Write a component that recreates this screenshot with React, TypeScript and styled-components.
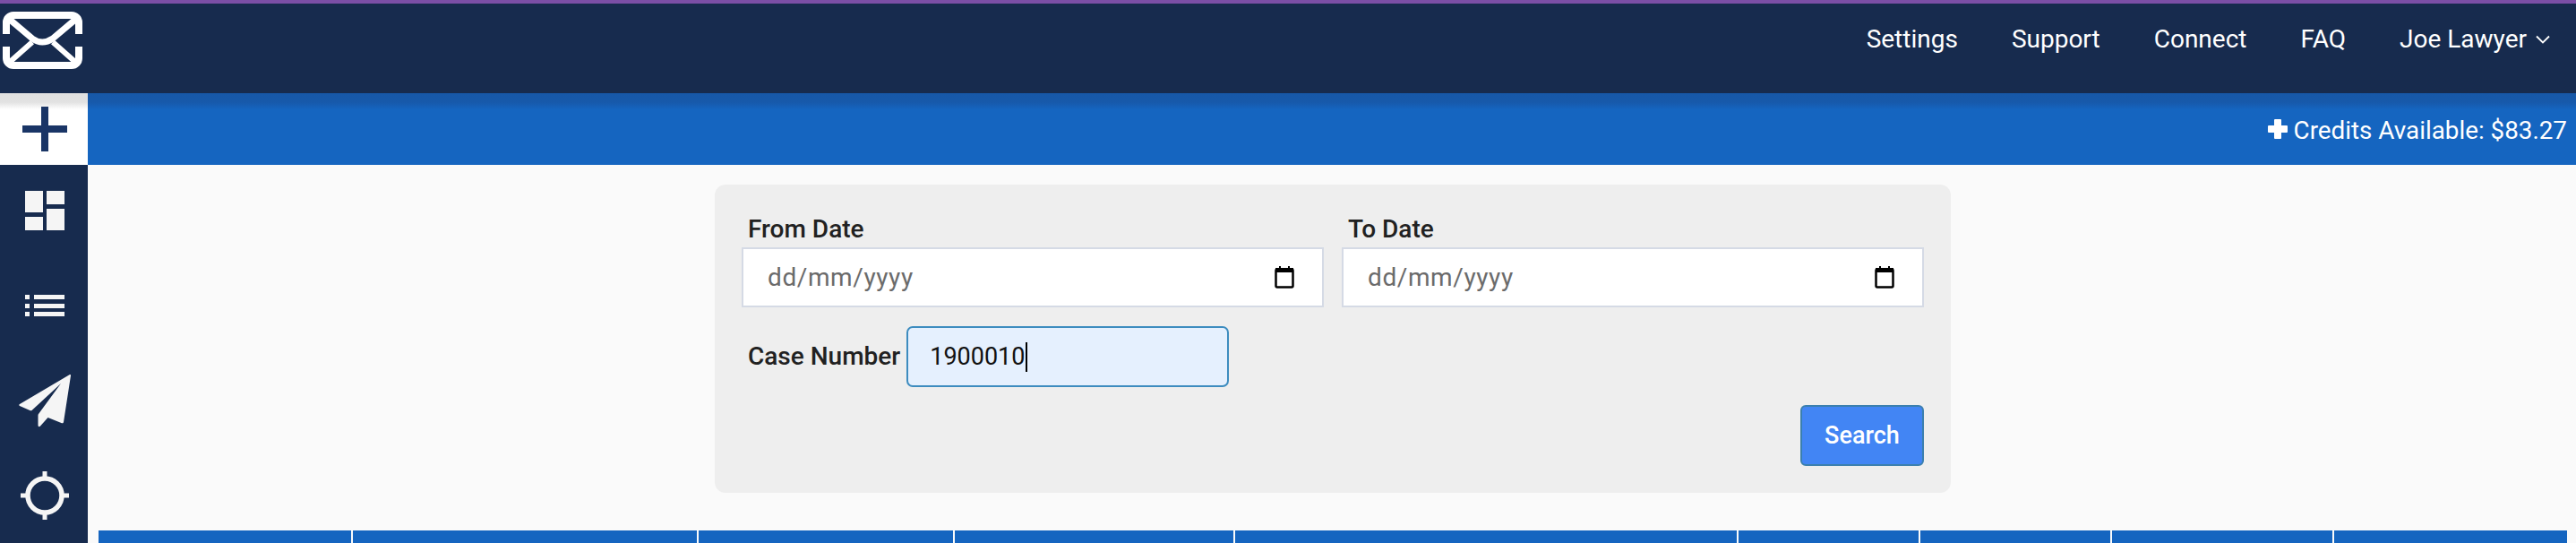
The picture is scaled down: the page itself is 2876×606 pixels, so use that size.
import React from 'react';
import styled, { createGlobalStyle } from 'styled-components';

const GlobalStyle = createGlobalStyle`
  html, body {
    margin: 0;
    padding: 0;
    height: 100%;
    background: #fafafa;
    overflow: hidden;
  }
  * {
    box-sizing: border-box;
  }
`;

const Page = styled.div`
  display: flex;
  flex-direction: column;
  height: 100vh;
  overflow: hidden;
  font-family: Roboto, "Liberation Sans", sans-serif;
  background: #fafafa;
`;

const TopStripe = styled.div`
  flex: none;
  height: 4px;
  background: #7b4fa6;
`;

const Header = styled.header`
  flex: none;
  display: flex;
  justify-content: space-between;
  height: 100px;
  padding: 9px 29px 0 3px;
  background: #172b4e;
`;

const NavList = styled.nav`
  display: flex;
  align-items: flex-start;
  gap: 60px;
  padding-top: 10px;
`;

const NavLink = styled.a`
  display: flex;
  align-items: center;
  gap: 10px;
  font-size: 28px;
  line-height: 42px;
  color: #ffffff;
`;

const Body = styled.div`
  flex: 1;
  display: flex;
  min-height: 0;
`;

const Sidebar = styled.aside`
  flex: none;
  display: flex;
  flex-direction: column;
  width: 98px;
  background: #172b4e;
`;

const AddButton = styled.div`
  flex: none;
  display: flex;
  align-items: center;
  justify-content: center;
  height: 80px;
  padding-left: 2px;
  background: linear-gradient(#e0e0e0 0, #e2e2e2 10px, #ffffff 18px);
`;

const SideIcons = styled.div`
  display: flex;
  flex-direction: column;
  align-items: center;
  gap: 46px;
  padding: 21px 0 0 2px;
`;

const Main = styled.main`
  flex: 1;
  display: flex;
  flex-direction: column;
  min-width: 0;
`;

const CreditsBar = styled.div`
  flex: none;
  display: flex;
  align-items: center;
  justify-content: flex-end;
  gap: 7px;
  height: 80px;
  padding: 2px 10px 0 0;
  font-size: 27.8px;
  color: #ffffff;
  background: linear-gradient(#1758a8 0, #1759aa 10px, #1565c0 18px);

  svg {
    margin-top: -2px;
  }
`;

const SearchPanel = styled.form`
  flex: none;
  display: flex;
  flex-direction: column;
  align-self: center;
  width: 1380px;
  height: 344px;
  margin: 22px 0 0 2px;
  padding: 30px 30px 0;
  border-radius: 12px;
  background: #eeeeee;
`;

const DateRow = styled.div`
  display: flex;
  gap: 20px;
`;

const DateField = styled.div`
  display: flex;
  flex-direction: column;
  width: 650px;
`;

const Label = styled.label`
  font-size: 28px;
  font-weight: 500;
  line-height: 40px;
  color: #212121;
`;

const FieldLabel = styled(Label)`
  padding-left: 7px;
`;

const DateBox = styled.div`
  display: flex;
  align-items: center;
  justify-content: space-between;
  height: 67px;
  padding: 0 31px 0 27px;
  border: 2px solid #d5dae5;
  background: #ffffff;
`;

const DateInput = styled.input`
  width: 300px;
  padding: 0;
  border: none;
  outline: none;
  background: transparent;
  font-family: inherit;
  font-size: 28px;
  letter-spacing: 0.6px;

  &::placeholder {
    color: #6b6b6b;
    opacity: 1;
  }
`;

const CaseRow = styled.div`
  display: flex;
  align-items: center;
  gap: 7px;
  margin-top: 21px;
  padding-left: 7px;
`;

const CaseInput = styled.div`
  display: flex;
  align-items: center;
  width: 360px;
  height: 68px;
  padding-left: 24px;
  border: 2px solid #3d8cbf;
  border-radius: 7px;
  background: #e5f0fe;
  font-size: 27px;
  color: #111111;
`;

const Caret = styled.span`
  width: 2px;
  height: 33px;
  margin-left: 1px;
  background: #000000;
`;

const ButtonRow = styled.div`
  display: flex;
  justify-content: flex-end;
  margin-top: 20px;
`;

const SearchButton = styled.button`
  width: 138px;
  height: 68px;
  padding: 0;
  border: 2px solid #3b7fae;
  border-radius: 6px;
  background: #4285f4;
  color: #ffffff;
  font-family: inherit;
  font-size: 27px;
  font-weight: 500;
`;

const ResultsHead = styled.div`
  flex: none;
  display: grid;
  grid-template-columns: 282px 384px 284px 311px 560px 201px 212px 246px 260px;
  gap: 2px;
  width: 2756px;
  height: 60px;
  margin: 42px 0 0 12px;
`;

const HeadCell = styled.div`
  background: #1565c0;
`;

const LogoIcon = () => (
  <svg width="89" height="65" viewBox="0 0 89 65" fill="none" stroke="#ffffff" strokeWidth="8">
    <path d="M4 25V12a8 8 0 0 1 8-8h65a8 8 0 0 1 8 8v13" />
    <path d="M4 39v13a8 8 0 0 0 8 8h65a8 8 0 0 0 8-8V39" />
    <path d="M7 8l26 22q11 8 23 0L82 8" strokeWidth="7" />
    <path d="M33 34L7 57M56 34l26 23" strokeWidth="6" />
  </svg>
);

const PlusIcon = () => (
  <svg width="50" height="50" viewBox="0 0 50 50" fill="#1a3566">
    <rect x="21" y="0" width="8" height="50" />
    <rect x="0" y="21" width="50" height="8" />
  </svg>
);

const DashboardIcon = () => (
  <svg width="60" height="60" viewBox="0 0 60 60" fill="#f5f5f5">
    <rect x="8" y="8" width="20" height="24" />
    <rect x="32" y="8" width="20" height="15" />
    <rect x="8" y="37" width="20" height="15" />
    <rect x="32" y="28" width="20" height="24" />
  </svg>
);

const ListIcon = () => (
  <svg width="60" height="60" viewBox="0 0 60 60" fill="#f5f5f5">
    <rect x="8" y="18" width="5" height="5" />
    <rect x="8" y="28" width="5" height="5" />
    <rect x="8" y="37" width="5" height="5" />
    <rect x="18" y="18" width="34" height="5" />
    <rect x="18" y="28" width="34" height="5" />
    <rect x="18" y="37" width="34" height="5" />
  </svg>
);

const PlaneIcon = () => (
  <svg width="60" height="60" viewBox="0 0 60 60" fill="#f5f5f5">
    <path d="M57.500 1.200c1-.5 1.600 0 1.500 1L51 54c-.2 1-1 1.500-2 1.200L33.500 49 25 58.500c-1 1.300-2.500.8-2.500-1V46.500c0-.7.3-1.200.7-1.700L48 11 15.500 41c-.5.4-1 .5-1.600.2L2 36c-1-.5-1-1.500 0-2z" />
  </svg>
);

const TargetIcon = () => (
  <svg width="60" height="60" viewBox="0 0 60 60" fill="none" stroke="#f5f5f5">
    <circle cx="30" cy="30" r="19" strokeWidth="5.500" />
    <path d="M30 3v6M30 51v6M3 30h6M51 30h6" strokeWidth="5" />
  </svg>
);

const CalendarIcon = () => (
  <svg width="22" height="25" viewBox="0 0 22 25" fill="none" stroke="#000000">
    <rect x="1.500" y="3.500" width="19" height="20" rx="1.500" strokeWidth="2.500" />
    <rect x="1" y="2" width="20" height="5" fill="#000000" stroke="none" />
    <path d="M6 0v3M16 0v3" strokeWidth="2" />
  </svg>
);

const ChevronIcon = () => (
  <svg width="16" height="10" viewBox="0 0 16 10" fill="none" stroke="#ffffff" strokeWidth="1.800">
    <path d="M1 1.500l7 7 7-7" />
  </svg>
);

const CreditPlusIcon = () => (
  <svg width="22" height="22" viewBox="0 0 22 22" fill="#ffffff">
    <rect x="7" y="0" width="8" height="22" rx="1" />
    <rect x="0" y="7" width="22" height="8" rx="1" />
  </svg>
);

const navLinks = ['Settings', 'Support', 'Connect', 'FAQ'];
const resultColumns = ['case', 'court', 'filed', 'party', 'title', 'type', 'status', 'fee', 'actions'];

const App: React.FC = () => {
  return (
    <Page>
      <GlobalStyle />
      <TopStripe />
      <Header>
        <LogoIcon />
        <NavList>
          {navLinks.map((link) => (
            <NavLink key={link}>{link}</NavLink>
          ))}
          <NavLink>
            Joe Lawyer
            <ChevronIcon />
          </NavLink>
        </NavList>
      </Header>
      <Body>
        <Sidebar>
          <AddButton>
            <PlusIcon />
          </AddButton>
          <SideIcons>
            <DashboardIcon />
            <ListIcon />
            <PlaneIcon />
            <TargetIcon />
          </SideIcons>
        </Sidebar>
        <Main>
          <CreditsBar>
            <CreditPlusIcon />
            <span>Credits Available: $83.27</span>
          </CreditsBar>
          <SearchPanel>
            <DateRow>
              <DateField>
                <FieldLabel>From Date</FieldLabel>
                <DateBox>
                  <DateInput placeholder="dd/mm/yyyy" readOnly />
                  <CalendarIcon />
                </DateBox>
              </DateField>
              <DateField>
                <FieldLabel>To Date</FieldLabel>
                <DateBox>
                  <DateInput placeholder="dd/mm/yyyy" readOnly />
                  <CalendarIcon />
                </DateBox>
              </DateField>
            </DateRow>
            <CaseRow>
              <Label>Case Number</Label>
              <CaseInput>
                1900010
                <Caret />
              </CaseInput>
            </CaseRow>
            <ButtonRow>
              <SearchButton type="button">Search</SearchButton>
            </ButtonRow>
          </SearchPanel>
          <ResultsHead>
            {resultColumns.map((column) => (
              <HeadCell key={column} />
            ))}
          </ResultsHead>
        </Main>
      </Body>
    </Page>
  );
};

export default App;
